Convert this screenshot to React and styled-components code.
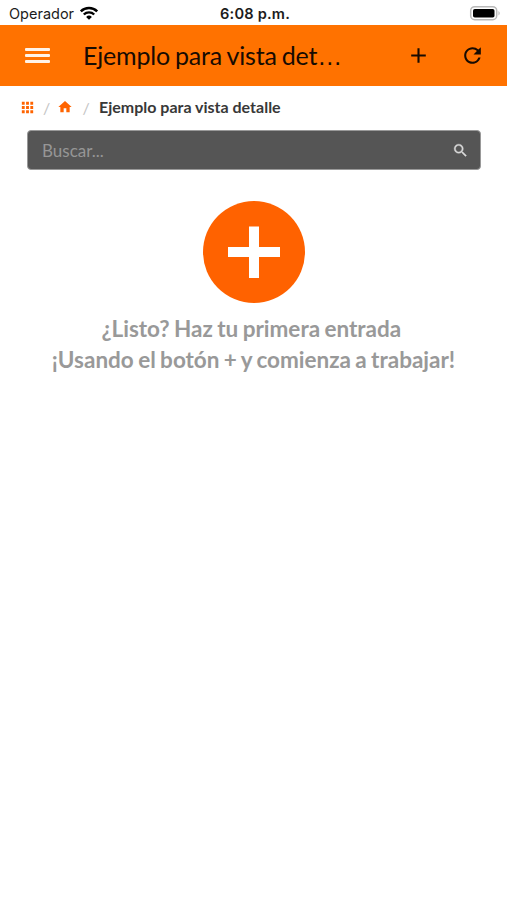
import React from 'react';
import styled, { createGlobalStyle } from 'styled-components';
import { MdAdd, MdRefresh, MdApps, MdHome, MdSearch } from 'react-icons/md';

const GlobalStyle = createGlobalStyle`
  * {
    box-sizing: border-box;
  }

  body {
    margin: 0;
    background-color: #fff;
    font-family: Lato, sans-serif;
  }
`;

const Screen = styled.div`
  display: flex;
  flex-direction: column;
  height: 900px;
  background-color: #fff;
  overflow: hidden;
`;

const StatusBar = styled.div`
  display: grid;
  grid-template-columns: 1fr auto 1fr;
  align-items: center;
  height: 25px;
  padding: 2px 6px 0 9px;
  font-family: Inter, sans-serif;
  color: #1c1c1c;
`;

const Carrier = styled.div`
  display: flex;
  align-items: center;
  gap: 5px;
  font-size: 14.5px;
`;

const Clock = styled.div`
  font-size: 14.6px;
  font-weight: 600;
  letter-spacing: 0.2px;
`;

const Battery = styled.svg`
  width: 32px;
  height: 16px;
  justify-self: end;
  margin-top: -1px;
`;

const Header = styled.header`
  display: flex;
  align-items: center;
  height: 61px;
  padding: 0 22px 0 25px;
  background-color: #ff7200;
  color: #170b02;
`;

const MenuButton = styled.button`
  display: flex;
  flex-direction: column;
  gap: 2.5px;
  width: 25px;
  padding: 0;
  border: none;
  background: none;
`;

const MenuLine = styled.span`
  height: 3.5px;
  border-radius: 1px;
  background-color: #fff3e8;
`;

const Title = styled.h1`
  margin: 0 0 0 33px;
  font-size: 25px;
  font-weight: 400;
  line-height: 32px;
  letter-spacing: -0.18px;
  word-spacing: -1.2px;
  white-space: nowrap;
`;

const Ellipsis = styled.span`
  font-family: 'Liberation Sans', sans-serif;
`;

const Actions = styled.div`
  display: flex;
  gap: 29px;
  margin-left: auto;
`;

const IconButton = styled.button`
  display: flex;
  padding: 0;
  border: none;
  background: none;
  color: inherit;
  font-size: 25px;
`;

const Breadcrumb = styled.nav`
  display: flex;
  align-items: center;
  height: 44px;
  padding: 0 0 2px 19px;
  color: #ff6400;
`;

const Separator = styled.span`
  width: ${(props) => props.$width}px;
  font-size: 16px;
  text-align: center;
  color: #c4c4c4;
`;

const Current = styled.span`
  margin-top: -1px;
  font-size: 16px;
  font-weight: 700;
  color: #383838;
`;

const SearchBox = styled.label`
  display: flex;
  align-items: center;
  height: 40px;
  margin: 0 26px 0 26.5px;
  padding: 0 11px 0 14.5px;
  border: 1px solid #999;
  border-radius: 4px;
  background-color: #555;
  color: #d8d8d8;
  font-size: 17px;

  path:not([fill]) {
    stroke: currentColor;
    stroke-width: 0.5px;
  }
`;

const SearchInput = styled.input`
  flex: 1;
  min-width: 0;
  padding: 0;
  border: none;
  outline: none;
  background: none;
  color: #fff;
  font: inherit;

  &::placeholder {
    color: #969696;
    opacity: 1;
  }
`;

const Empty = styled.main`
  display: flex;
  flex-direction: column;
  align-items: center;
  padding-top: 30.5px;
`;

const AddCircle = styled.button`
  display: flex;
  width: 102px;
  height: 102px;
  padding: 0;
  border: none;
  border-radius: 50%;
  background-color: #ff6200;
`;

const Message = styled.p`
  margin: 11.5px 0 0;
  font-size: 22.5px;
  font-weight: 700;
  line-height: 30.5px;
  word-spacing: -1.1px;
  text-align: center;
  white-space: nowrap;
  color: #999;
`;

const WifiIcon = () => (
  <svg width="20" height="15" viewBox="0 0 20 15" fill="none" stroke="#000">
    <path d="M1.8 5.4a11.7 11.7 0 0 1 16.4 0" strokeWidth="2.5" />
    <path d="M4.8 8.5a7.4 7.4 0 0 1 10.4 0" strokeWidth="2.4" />
    <path d="M10 13.8 7.1 10.9a4.1 4.1 0 0 1 5.8 0z" fill="#000" stroke="none" />
  </svg>
);

const App = () => {
  return (
    <>
      <GlobalStyle />
      <Screen>
        <StatusBar>
          <Carrier>
            Operador
            <WifiIcon />
          </Carrier>
          <Clock>6:08 p.m.</Clock>
          <Battery viewBox="0 0 32 16">
            <rect x="1.7" y="1.7" width="26" height="13" rx="4" fill="#fff" stroke="#b9b9b9" strokeWidth="1.5" />
            <rect x="4" y="4" width="21.5" height="8.5" rx="1.8" fill="#000" />
            <path d="M29.5 6v4.4c1.6-.7 1.6-3.7 0-4.4z" fill="#b5b5b5" />
          </Battery>
        </StatusBar>
        <Header>
          <MenuButton aria-label="Menú">
            <MenuLine />
            <MenuLine />
            <MenuLine />
          </MenuButton>
          <Title>
            Ejemplo para vista det<Ellipsis>…</Ellipsis>
          </Title>
          <Actions>
            <IconButton aria-label="Agregar"><MdAdd /></IconButton>
            <IconButton aria-label="Actualizar"><MdRefresh /></IconButton>
          </Actions>
        </Header>
        <Breadcrumb>
          <MdApps size={17} />
          <Separator $width={21}>/</Separator>
          <MdHome size={16} />
          <Separator $width={26}>/</Separator>
          <Current>Ejemplo para vista detalle</Current>
        </Breadcrumb>
        <SearchBox>
          <SearchInput placeholder="Buscar..." />
          <MdSearch />
        </SearchBox>
        <Empty>
          <AddCircle aria-label="Nueva entrada">
            <svg width="102" height="102" viewBox="0 0 102 102" fill="#fff">
              <path d="M46 25.5h10V46h21v10H56v21H46V56H25V46h21z" />
            </svg>
          </AddCircle>
          <Message>
            ¿Listo? Haz tu primera entrada&nbsp;
            <br />
            ¡Usando el botón + y comienza a trabajar!
          </Message>
        </Empty>
      </Screen>
    </>
  );
};

export default App;
